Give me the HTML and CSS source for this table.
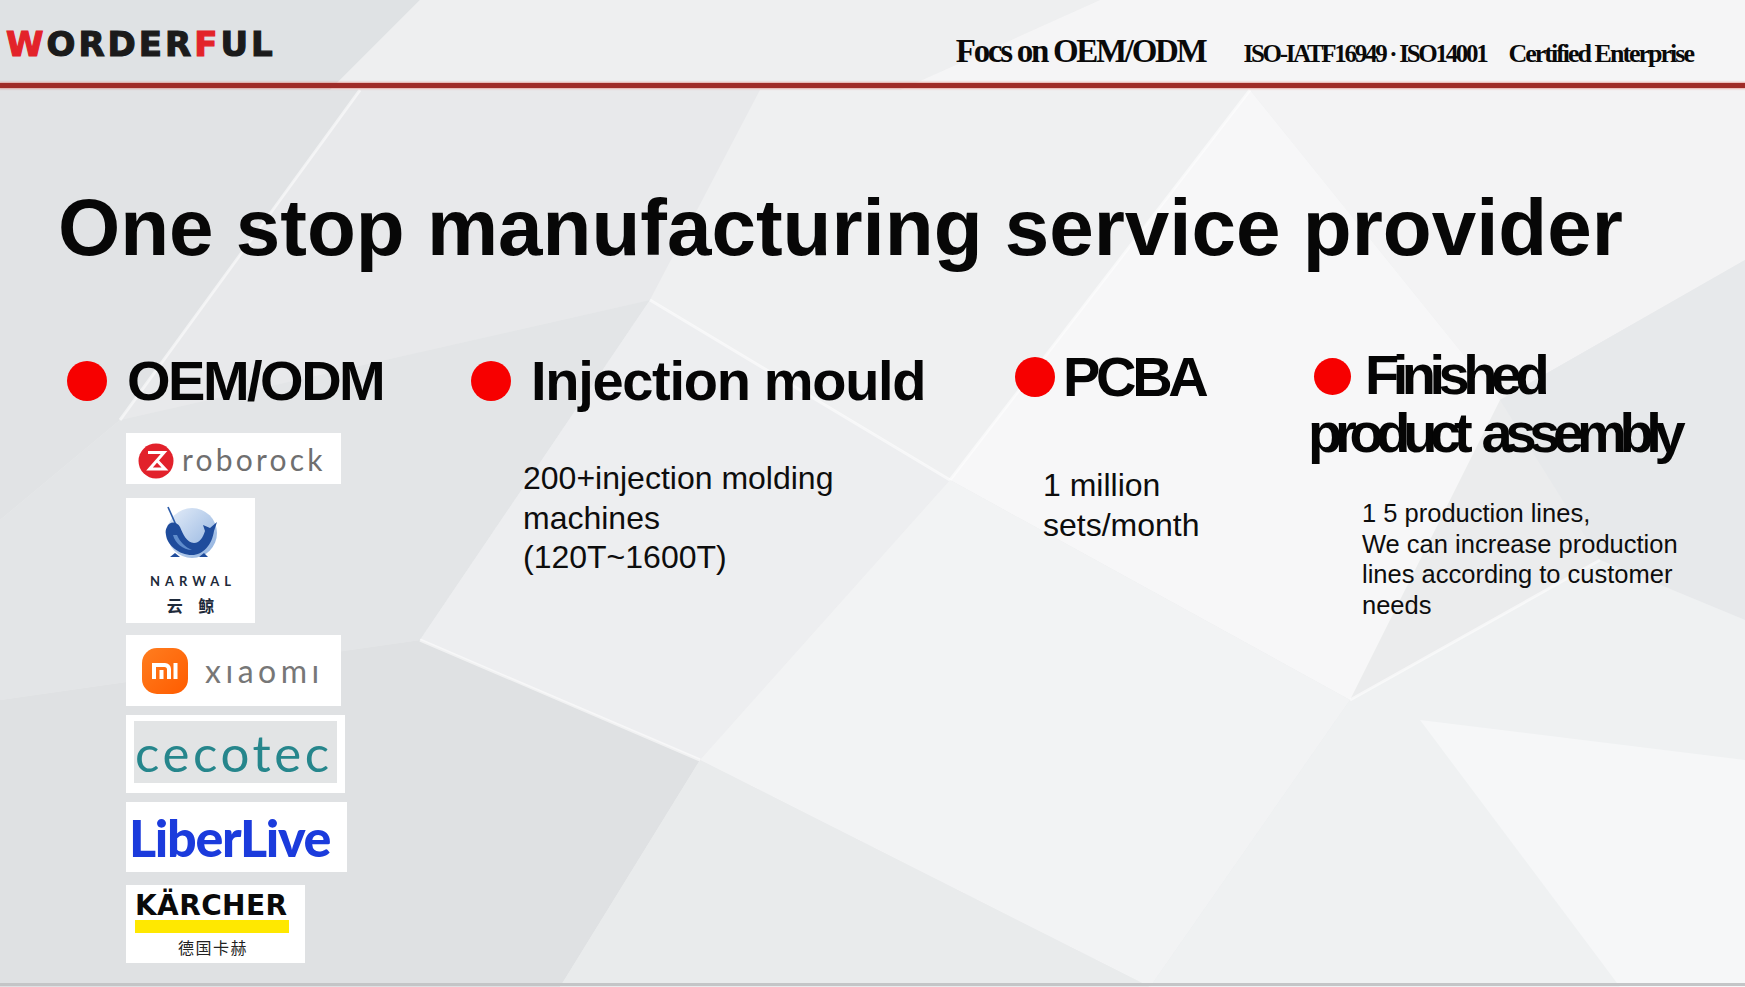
FILE: index.html
```html
<!DOCTYPE html>
<html lang="en">
<head>
<meta charset="utf-8">
<title>One stop manufacturing service provider</title>
<link rel="stylesheet" href="styles.css">
</head>
<body>
<div class="slide">
  <svg class="bg" viewBox="0 0 1745 987" preserveAspectRatio="none" aria-hidden="true">
    <rect width="1745" height="987" fill="#ebeced"/>
    <polygon points="0,0 420,0 330,90 0,90" fill="#dfe2e4"/>
    <polygon points="420,0 1100,0 900,90 330,90" fill="#eeeff0"/>
    <polygon points="1100,0 1745,0 1745,90 900,90" fill="#f5f5f6"/>
    <polygon points="0,90 360,90 120,420 0,520" fill="#e1e3e5"/>
    <polygon points="360,90 760,90 650,300 120,420" fill="#e8e9eb"/>
    <polygon points="760,90 1250,90 950,480 650,300" fill="#eff0f1"/>
    <polygon points="1250,90 1745,90 1745,260 1500,400" fill="#f3f3f4"/>
    <polygon points="950,480 1250,90 1500,400 1350,700" fill="#f7f7f8"/>
    <polygon points="1500,400 1745,260 1745,620 1600,560" fill="#e7e9eb"/>
    <polygon points="0,520 120,420 650,300 420,640 0,700" fill="#e3e5e7"/>
    <polygon points="650,300 950,480 700,760 420,640" fill="#edeef0"/>
    <polygon points="950,480 1350,700 1150,987 700,760" fill="#f2f3f4"/>
    <polygon points="1350,700 1600,560 1745,620 1745,987 1150,987" fill="#eff1f2"/>
    <polygon points="1420,720 1745,760 1745,987 1620,987" fill="#f6f7f8"/>
    <polygon points="0,700 420,640 700,760 560,987 0,987" fill="#dfe1e3"/>
    <polygon points="700,760 1150,987 560,987" fill="#e9ebec"/>
    <g stroke="#ffffff" stroke-opacity="0.55" stroke-width="3" fill="none">
      <line x1="360" y1="90" x2="120" y2="420"/>
      <line x1="650" y1="300" x2="950" y2="480"/>
      <line x1="1250" y1="90" x2="950" y2="480"/>
      <line x1="420" y1="640" x2="700" y2="760"/>
      <line x1="1350" y1="700" x2="1600" y2="560"/>
    </g>
  </svg>

  <header class="topbar">
    <div class="brand"><span class="red">W</span>ORDER<span class="red">F</span>UL</div>
    <div class="tagline">
      <span class="tag-main">Focs on OEM/ODM</span>
      <span class="tag-iso">ISO-IATF16949 · ISO14001</span>
      <span class="tag-cert">Certified Enterprise</span>
    </div>
  </header>
  <div class="rule"></div>

  <h1 class="title">One stop manufacturing service provider</h1>

  <section class="features">
    <div class="feature">
      <h2 class="feat-head"><span class="dot"></span><span class="ht ht-oem">OEM/ODM</span></h2>
      <div class="logos">
        <div class="logo logo-roborock">
          <svg class="rr-mark" viewBox="-18 -18 36 36" width="36" height="36">
            <circle r="17.5" fill="#e2212b"/>
            <path d="M-8,-8.5 H8 L-6.5,8 H9 L1.5,0" fill="none" stroke="#fff" stroke-width="3" stroke-linejoin="miter"/>
          </svg>
          <span class="rr-text">roborock</span>
        </div>
        <div class="logo logo-narwal">
          <svg viewBox="0 0 60 56" width="60" height="56">
            <defs>
              <linearGradient id="nw" x1="0" y1="0" x2="1" y2="1">
                <stop offset="0" stop-color="#e6eef9"/>
                <stop offset="1" stop-color="#8cafde"/>
              </linearGradient>
            </defs>
            <circle cx="31" cy="30" r="25" fill="url(#nw)"/>
            <line x1="7" y1="4" x2="15" y2="22" stroke="#2a5aa8" stroke-width="1.6"/>
            <path d="M6,24 C8,18 16,18 19,24 C22,31 26,40 33,40 C39,40 42,34 44,28 L42,22 L49,25 L56,19 L53,28 C51,42 42,52 31,52 C18,52 6,42 5,32 C4,28 5,26 6,24 Z" fill="#1f4c9c"/>
            <path d="M12,32 C14,40 22,47 31,47 C24,44 19,39 16,32 Z" fill="#5f8ccc"/>
            <path d="M9,54 L14,50 L19,54 Z M38,54 L43,50 L47,54 Z" fill="#1f4c9c"/>
          </svg>
          <span class="nw-text">NARWAL</span>
          <span class="nw-cn">云 鲸</span>
        </div>
        <div class="logo logo-xiaomi">
          <svg viewBox="0 0 46 46" width="46" height="46">
            <defs>
              <linearGradient id="mi" x1="0" y1="0" x2="1" y2="1">
                <stop offset="0" stop-color="#ff7d1f"/>
                <stop offset="1" stop-color="#ff5c00"/>
              </linearGradient>
            </defs>
            <rect width="46" height="46" rx="15" fill="url(#mi)"/>
            <path d="M10,31 V15 H23 a6,6 0 0 1 6,6 V31 H25 V21.5 a2.5,2.5 0 0 0 -2.5,-2.5 H14 V31 Z" fill="#fff"/>
            <rect x="17.5" y="22" width="4" height="9" fill="#fff"/>
            <rect x="31.5" y="15" width="4" height="16" fill="#fff"/>
          </svg>
          <span class="mi-text">xıaomı</span>
        </div>
        <div class="logo logo-cecotec">
          <div class="ceco-inner"><span class="ceco-text">cecotec</span></div>
        </div>
        <div class="logo logo-liberlive"><span class="ll-text">LiberLive</span></div>
        <div class="logo logo-karcher">
          <span class="k-text">KÄRCHER</span>
          <span class="k-bar"></span>
          <span class="k-cn">德国卡赫</span>
        </div>
      </div>
    </div>

    <div class="feature">
      <h2 class="feat-head"><span class="dot dot-2"></span><span class="ht ht-inj">Injection mould</span></h2>
      <p class="feat-text text-inj">200+injection molding<br>machines<br>(120T~1600T)</p>
    </div>

    <div class="feature">
      <h2 class="feat-head"><span class="dot dot-3"></span><span class="ht ht-pcba">PCBA</span></h2>
      <p class="feat-text text-pcba">1 million<br>sets/month</p>
    </div>

    <div class="feature">
      <h2 class="feat-head-wrap"><span class="dot dot-4"></span><span class="ht-fin">Finished</span><br><span class="ht-prod">product assembly</span></h2>
      <p class="feat-text-small">1 5 production lines,<br>We can increase production<br>lines according to customer<br>needs</p>
    </div>
  </section>
</div>
</body>
</html>
```

FILE: styles.css
```css
* { box-sizing: border-box; }

html, body {
  margin: 0;
  padding: 0;
}

body {
  width: 1745px;
  height: 987px;
  overflow: hidden;
  font-family: "Liberation Sans", Arial, sans-serif;
  color: #0d0d0d;
  background: #ebeced;
}

.slide {
  position: relative;
  width: 1745px;
  height: 987px;
  overflow: hidden;
}

.slide::after {
  content: "";
  position: absolute;
  left: 0;
  right: 0;
  bottom: 1px;
  height: 3px;
  background: #c4c5c7;
  z-index: 1;
}

.bg {
  position: absolute;
  left: 0;
  top: 0;
  width: 1745px;
  height: 987px;
  z-index: 0;
}

.topbar, .rule, .title, .features {
  position: relative;
  z-index: 1;
}

/* ---------- header ---------- */
.topbar {
  display: flex;
  align-items: flex-start;
  height: 83px;
  padding: 0 52px 0 6px;
}

.brand {
  margin-top: 27px;
  font-family: "DejaVu Sans", sans-serif;
  font-weight: 700;
  font-size: 34px;
  line-height: 34px;
  letter-spacing: 3px;
  color: #1b1b1b;
  -webkit-text-stroke: 1.2px #1b1b1b;
}

.brand .red {
  color: #e3232a;
  -webkit-text-stroke: 1.2px #e3232a;
}

.tagline {
  margin-left: auto;
  margin-top: 35px;
  display: flex;
  align-items: baseline;
  font-family: "Liberation Serif", "Times New Roman", serif;
  font-weight: 700;
  color: #0a0a0a;
}

.tag-main {
  font-size: 33px;
  line-height: 33px;
  letter-spacing: -2.3px;
}

.tag-iso {
  margin-left: 38px;
  font-size: 25px;
  letter-spacing: -2.3px;
}

.tag-cert {
  margin-left: 22px;
  font-size: 26px;
  letter-spacing: -2px;
}

.rule {
  height: 5px;
  background: #9f2b27;
  box-shadow: 0 0 2px 1px rgba(224, 110, 100, 0.55);
}

/* ---------- title ---------- */
.title {
  margin: 100px 0 0 0;
  padding-left: 58px;
  font-size: 80px;
  line-height: 80px;
  font-weight: 700;
  color: #070707;
  white-space: nowrap;
}

/* ---------- features ---------- */
.features {
  margin-top: 85px;
  padding-left: 67px;
  display: grid;
  grid-template-columns: 404px 544px 296px 1fr;
}

.feature {
  display: flex;
  flex-direction: column;
  align-items: flex-start;
}

.feat-head {
  margin: 0;
  display: flex;
  align-items: center;
  height: 56px;
  font-size: 56px;
  line-height: 56px;
  font-weight: 700;
  color: #050505;
  white-space: nowrap;
}

.dot {
  display: inline-block;
  flex: none;
  width: 40px;
  height: 40px;
  border-radius: 50%;
  background: #f70000;
  margin-right: 20px;
}

.dot-3 { margin-right: 8px; margin-top: -8px; }

.ht-oem { letter-spacing: -2.5px; }
.ht-inj { letter-spacing: -1.3px; }
.ht-pcba { letter-spacing: -4.3px; margin-top: -8px; }

.feat-head-wrap {
  margin: -7px 0 0 -3px;
  font-size: 56px;
  line-height: 58px;
  font-weight: 700;
  color: #050505;
  white-space: nowrap;
}

.dot-4 {
  width: 37px;
  height: 37px;
  margin: 0 14px 0 6px;
  vertical-align: -1px;
}

.ht-fin { letter-spacing: -6.5px; }
.ht-prod { letter-spacing: -7.3px; word-spacing: 8px; }

.feat-text {
  margin: 0;
  font-size: 32px;
  line-height: 39.5px;
  color: #0d0d0d;
}

.text-inj { margin: 50px 0 0 52px; }
.text-pcba { margin: 57px 0 0 28px; }

.feat-text-small {
  margin: 36px 0 0 51px;
  font-size: 25.5px;
  line-height: 30.5px;
  color: #0d0d0d;
}

/* ---------- logos ---------- */
.logos {
  margin: 24px 0 0 59px;
  display: flex;
  flex-direction: column;
  align-items: flex-start;
}

.logo {
  background: #ffffff;
  display: flex;
  align-items: center;
}

.logo-roborock {
  width: 215px;
  height: 51px;
  padding-left: 12px;
}

.rr-mark { flex: none; margin-top: 5px; }

.rr-text {
  margin-left: 8px;
  font-family: Lato, "Noto Sans", sans-serif;
  font-size: 30px;
  line-height: 30px;
  letter-spacing: 3.2px;
  color: #6f6f6f;
}

.logo-narwal {
  margin-top: 14px;
  width: 129px;
  height: 125px;
  flex-direction: column;
  align-items: center;
  justify-content: flex-start;
  padding-top: 5px;
}

.nw-text {
  margin-top: 15px;
  padding-left: 5px;
  font-family: Lato, "Noto Sans", sans-serif;
  font-weight: 700;
  font-size: 13px;
  line-height: 14px;
  letter-spacing: 5px;
  color: #1e2a3a;
}

.nw-cn {
  margin-top: 8px;
  font-family: "Noto Sans CJK SC", sans-serif;
  font-weight: 700;
  font-size: 16px;
  line-height: 18px;
  letter-spacing: 6px;
  padding-left: 6px;
  white-space: pre;
  color: #1e2a3a;
}

.logo-xiaomi {
  margin-top: 12px;
  width: 215px;
  height: 71px;
  padding-left: 16px;
}

.logo-xiaomi svg { flex: none; margin-top: 1px; }

.mi-text {
  margin-left: 17px;
  font-family: Lato, "Noto Sans", sans-serif;
  font-size: 32px;
  line-height: 32px;
  letter-spacing: 4.5px;
  color: #777777;
}

.logo-cecotec {
  margin-top: 9px;
  width: 219px;
  height: 78px;
  padding: 6px 8px 10px 8px;
}

.ceco-inner {
  width: 203px;
  height: 62px;
  background: #e2e4e5;
  display: flex;
  align-items: center;
}

.ceco-text {
  margin-left: 1px;
  font-family: Lato, "Noto Sans", sans-serif;
  font-weight: 400;
  font-size: 51px;
  line-height: 51px;
  letter-spacing: 3.6px;
  color: #26868c;
}

.logo-liberlive {
  margin-top: 9px;
  width: 221px;
  height: 70px;
}

.ll-text {
  margin-left: 3px;
  font-family: Lato, "Noto Sans", sans-serif;
  font-weight: 900;
  font-size: 52px;
  line-height: 52px;
  letter-spacing: -1.3px;
  color: #1b3bdc;
}

.logo-karcher {
  margin-top: 13px;
  width: 179px;
  height: 78px;
  flex-direction: column;
  align-items: flex-start;
  padding: 8px 0 0 9px;
}

.k-text {
  font-family: "DejaVu Sans", sans-serif;
  font-weight: 700;
  font-size: 28px;
  line-height: 26px;
  letter-spacing: 0.4px;
  color: #0a0a0a;
}

.k-bar {
  display: block;
  margin-top: 1px;
  width: 154px;
  height: 13px;
  background: #ffe800;
}

.k-cn {
  margin: 4px 0 0 43px;
  font-family: "Noto Sans CJK SC", sans-serif;
  font-size: 16px;
  line-height: 20px;
  letter-spacing: 1.5px;
  color: #222222;
}
```
